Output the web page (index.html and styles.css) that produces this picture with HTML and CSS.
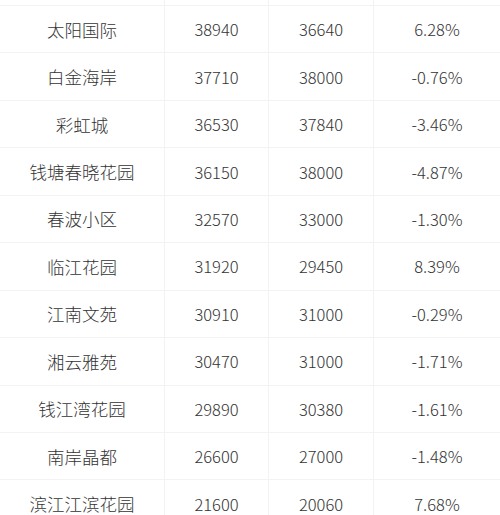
FILE: index.html
```html
<!DOCTYPE html>
<html lang="zh">
<head>
<meta charset="utf-8">
<link rel="stylesheet" href="styles.css">
</head>
<body>
<div class="table">
  <div class="row top"><div class="c"></div><div class="c"></div><div class="c"></div><div class="c"></div></div>
  <div class="row"><div class="c">太阳国际</div><div class="c">38940</div><div class="c">36640</div><div class="c">6.28%</div></div>
  <div class="row"><div class="c">白金海岸</div><div class="c">37710</div><div class="c">38000</div><div class="c">-0.76%</div></div>
  <div class="row"><div class="c">彩虹城</div><div class="c">36530</div><div class="c">37840</div><div class="c">-3.46%</div></div>
  <div class="row"><div class="c">钱塘春晓花园</div><div class="c">36150</div><div class="c">38000</div><div class="c">-4.87%</div></div>
  <div class="row"><div class="c">春波小区</div><div class="c">32570</div><div class="c">33000</div><div class="c">-1.30%</div></div>
  <div class="row"><div class="c">临江花园</div><div class="c">31920</div><div class="c">29450</div><div class="c">8.39%</div></div>
  <div class="row"><div class="c">江南文苑</div><div class="c">30910</div><div class="c">31000</div><div class="c">-0.29%</div></div>
  <div class="row"><div class="c">湘云雅苑</div><div class="c">30470</div><div class="c">31000</div><div class="c">-1.71%</div></div>
  <div class="row"><div class="c">钱江湾花园</div><div class="c">29890</div><div class="c">30380</div><div class="c">-1.61%</div></div>
  <div class="row"><div class="c">南岸晶都</div><div class="c">26600</div><div class="c">27000</div><div class="c">-1.48%</div></div>
  <div class="row"><div class="c">滨江江滨花园</div><div class="c">21600</div><div class="c">20060</div><div class="c">7.68%</div></div>
</div>
</body>
</html>
```
FILE: styles.css
```css
html, body {
  margin: 0;
  padding: 0;
  background: #fff;
}
.table {
  width: 500px;
  font-family: "Noto Sans CJK SC", "Noto Sans", sans-serif;
  font-weight: 300;
  font-size: 16.5px;
  color: #333;
}
.row {
  display: grid;
  grid-template-columns: 165px 104px 105px 126px;
  height: 47.45px;
  border-bottom: 1px solid #f3f3f3;
  box-sizing: border-box;
}
.row.top {
  height: 6px;
}
.c {
  display: flex;
  align-items: center;
  justify-content: center;
  border-right: 1px solid #f3f3f3;
}
.c:first-child {
  font-size: 17.5px;
}
.c:last-child {
  border-right: none;
}
```
